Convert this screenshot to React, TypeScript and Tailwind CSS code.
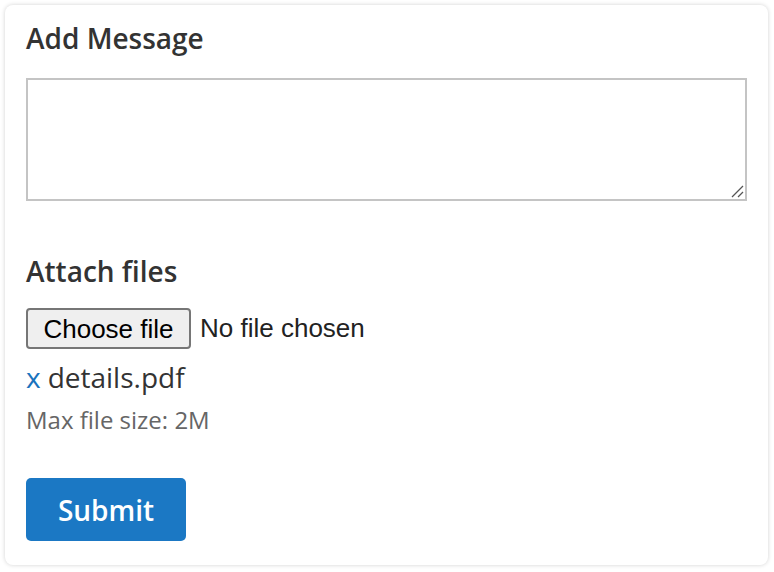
import React from 'react'

const sans = { fontFamily: '"Open Sans", "Noto Sans", sans-serif' }

export default function App() {
  return (
    <div className="w-[774px] h-[572px] bg-white p-[5px]" style={sans}>
      <div className="h-[560px] w-[763px] rounded-lg bg-white shadow-[0_0_4px_rgba(0,0,0,0.18)] px-[21px] pt-[14px]">
        <h2 className="text-[28px] leading-[38px] font-semibold text-[#333]">Add Message</h2>

        <div className="mt-[21px] relative">
          <textarea className="block w-[721px] h-[123px] border-2 border-[#c4c4c4] resize-none outline-none" />
          <svg className="absolute right-[3px] bottom-[3px]" width="14" height="14" viewBox="0 0 14 14">
            <line x1="2" y1="13" x2="13" y2="2" stroke="#555" strokeWidth="1.3" />
            <line x1="8" y1="13" x2="13" y2="8" stroke="#555" strokeWidth="1.3" />
          </svg>
        </div>

        <h3 className="mt-[51px] text-[28px] leading-[38px] font-semibold text-[#333]">Attach files</h3>

        <div className="mt-[18px] flex items-center gap-[9px]" style={{ fontFamily: '"Liberation Sans", Arial, sans-serif' }}>
          <button className="h-[41px] w-[165px] rounded-[4px] border-2 border-[#767676] bg-[#efefef] text-[26px] text-black">
            Choose file
          </button>
          <span className="text-[26px] text-[#222]">No file chosen</span>
        </div>

        <div className="mt-[9px] flex items-center gap-[7px] text-[28px] leading-[38px] text-[#333]">
          <a className="text-[#1a73bd]">x</a>
          <span>details.pdf</span>
        </div>

        <p className="mt-[8px] text-[24px] leading-[32px] text-[#666]">Max file size: 2M</p>

        <button className="mt-[42px] h-[63px] w-[160px] rounded-[5px] bg-[#1b78c4] text-[28px] font-semibold text-white">
          Submit
        </button>
      </div>
    </div>
  )
}
